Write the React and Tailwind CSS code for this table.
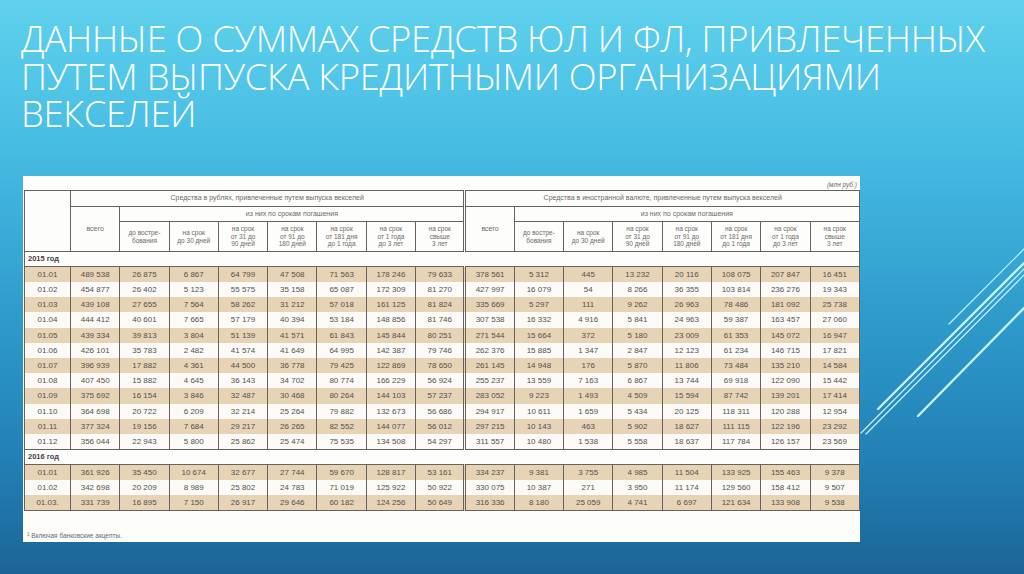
import React from "react";

const rows2015 = [
  ["01.01", "489 538", "26 875", "6 867", "64 799", "47 508", "71 563", "178 246", "79 633", "378 561", "5 312", "445", "13 232", "20 116", "108 075", "207 847", "16 451"],
  ["01.02", "454 877", "26 402", "5 123", "55 575", "35 158", "65 087", "172 309", "81 270", "427 997", "16 079", "54", "8 266", "36 355", "103 814", "236 276", "19 343"],
  ["01.03", "439 108", "27 655", "7 564", "58 262", "31 212", "57 018", "161 125", "81 824", "335 669", "5 297", "111", "9 262", "26 963", "78 486", "181 092", "25 738"],
  ["01.04", "444 412", "40 601", "7 665", "57 179", "40 394", "53 184", "148 856", "81 746", "307 538", "16 332", "4 916", "5 841", "24 963", "59 387", "163 457", "27 060"],
  ["01.05", "439 334", "39 813", "3 804", "51 139", "41 571", "61 843", "145 844", "80 251", "271 544", "15 664", "372", "5 180", "23 009", "61 353", "145 072", "16 947"],
  ["01.06", "426 101", "35 783", "2 482", "41 574", "41 649", "64 995", "142 387", "79 746", "262 376", "15 885", "1 347", "2 847", "12 123", "61 234", "146 715", "17 821"],
  ["01.07", "396 939", "17 882", "4 361", "44 500", "36 778", "79 425", "122 869", "78 650", "261 145", "14 948", "176", "5 870", "11 806", "73 484", "135 210", "14 584"],
  ["01.08", "407 450", "15 882", "4 645", "36 143", "34 702", "80 774", "166 229", "56 924", "255 237", "13 559", "7 163", "6 867", "13 744", "69 918", "122 090", "15 442"],
  ["01.09", "375 692", "16 154", "3 846", "32 487", "30 468", "80 264", "144 103", "57 237", "283 052", "9 223", "1 493", "4 509", "15 594", "87 742", "139 201", "17 414"],
  ["01.10", "364 698", "20 722", "6 209", "32 214", "25 264", "79 882", "132 673", "56 686", "294 917", "10 611", "1 659", "5 434", "20 125", "118 311", "120 288", "12 954"],
  ["01.11", "377 324", "19 156", "7 684", "29 217", "26 265", "82 552", "144 077", "56 012", "297 215", "10 143", "463", "5 902", "18 627", "111 115", "122 196", "23 292"],
  ["01.12", "356 044", "22 943", "5 800", "25 862", "25 474", "75 535", "134 508", "54 297", "311 557", "10 480", "1 538", "5 558", "18 637", "117 784", "126 157", "23 569"],
];

const rows2016 = [
  ["01.01", "361 926", "35 450", "10 674", "32 677", "27 744", "59 670", "128 817", "53 161", "334 237", "9 381", "3 755", "4 985", "11 504", "133 925", "155 463", "9 378"],
  ["01.02", "342 698", "20 209", "8 989", "25 802", "24 783", "71 019", "125 922", "50 922", "330 075", "10 387", "271", "3 950", "11 174", "129 560", "158 412", "9 507"],
  ["01.03.", "331 739", "16 895", "7 150", "26 917", "29 646", "60 182", "124 256", "50 649", "316 336", "8 180", "25 059", "4 741", "6 697", "121 634", "133 908", "9 538"],
];

const terms = [
  ["до востре-", "бования"],
  ["на срок", "до 30 дней"],
  ["на срок", "от 31 до", "90 дней"],
  ["на срок", "от 91 до", "180 дней"],
  ["на срок", "от 181 дня", "до 1 года"],
  ["на срок", "от 1 года", "до 3 лет"],
  ["на срок", "свыше", "3 лет"],
];

const bd = "border border-[#66625e]";

function TermCells() {
  return terms.map((t, i) => (
    <th key={i} className={`${bd} font-normal text-[6.5px] leading-[7.8px] text-[#6e6a66] align-middle`}>
      {t.map((l, j) => (
        <div key={j}>{l}</div>
      ))}
    </th>
  ));
}

function DataRow({ r, idx }) {
  const beige = idx % 2 === 0;
  return (
    <tr className={`h-[15.2px] ${beige ? "bg-[#e7d3b5]" : "bg-[#fbfaf7]"}`}>
      {r.map((c, i) => (
        <td
          key={i}
          className={`border-x border-[#66625e] text-center text-[8px] leading-[15px] p-0 text-[#55514d] ${i === 9 ? "border-l-[3px] border-l-[#66625e] border-double" : ""}`}
        >
          {c}
        </td>
      ))}
    </tr>
  );
}

function YearRow({ label }) {
  return (
    <tr className="h-[15px] bg-[#fdfdfc]">
      <td colSpan={17} className={`${bd} text-left pl-[3px] font-bold text-[7.5px] text-[#45413e]`}>
        {label}
      </td>
    </tr>
  );
}

export default function App() {
  const cols = [46, ...Array(16).fill(49.3)];
  return (
    <div className="relative w-[1024px] h-[574px] overflow-hidden bg-[linear-gradient(180deg,#5fd1ed_0%,#47bde3_25%,#2e9bcb_55%,#2280b5_80%,#1b6596_100%)]">
      <svg className="absolute inset-0" width="1024" height="574" viewBox="0 0 1024 574">
        <g stroke="#c6f1fb" strokeLinecap="round" fill="none">
          <line x1="949" y1="324" x2="1024" y2="249" strokeWidth="1.2" />
          <line x1="878" y1="409" x2="1024" y2="263" strokeWidth="2.4" />
          <line x1="861" y1="433" x2="1024" y2="269" strokeWidth="1.2" />
          <line x1="866" y1="434" x2="1024" y2="275" strokeWidth="1.2" />
          <line x1="918" y1="416" x2="1024" y2="308" strokeWidth="2.4" />
        </g>
      </svg>

      <div className="relative flex flex-col pl-[21px] pt-[20px]">
        <h1 className="text-white font-light text-[36.4px] leading-[37.5px] tracking-[-0.3px] [font-family:'Open_Sans',sans-serif]">
          <div>ДАННЫЕ О СУММАХ СРЕДСТВ ЮЛ И ФЛ, ПРИВЛЕЧЕННЫХ</div>
          <div>ПУТЕМ ВЫПУСКА КРЕДИТНЫМИ ОРГАНИЗАЦИЯМИ</div>
          <div>ВЕКСЕЛЕЙ</div>
        </h1>

        <div className="mt-[43.5px] ml-[2px] w-[837px] h-[366px] bg-[#fdfdfc] flex flex-col px-[1px] [font-family:'Liberation_Sans',Arial,sans-serif]">
          <div className="h-[14px] flex justify-end items-end pr-[2px] text-[6.5px] italic text-[#6e6a66]">(млн руб.)</div>
          <table className="table-fixed border-collapse w-[835px]">
            <colgroup>
              {cols.map((w, i) => (
                <col key={i} style={{ width: `${w}px` }} />
              ))}
            </colgroup>
            <thead>
              <tr className="h-[16px]">
                <th rowSpan={3} className={bd}></th>
                <th colSpan={8} className={`${bd} font-normal text-[7px] text-[#6e6a66]`}>
                  Средства в рублях, привлеченные путем выпуска векселей
                </th>
                <th colSpan={8} className={`${bd} border-l-[3px] border-double font-normal text-[7px] text-[#6e6a66]`}>
                  Средства в иностранной валюте, привлеченные путем выпуска векселей
                </th>
              </tr>
              <tr className="h-[15px]">
                <th rowSpan={2} className={`${bd} font-normal text-[7px] text-[#6e6a66]`}>всего</th>
                <th colSpan={7} className={`${bd} font-normal text-[7px] text-[#6e6a66]`}>из них по срокам погашения</th>
                <th rowSpan={2} className={`${bd} border-l-[3px] border-double font-normal text-[7px] text-[#6e6a66]`}>всего</th>
                <th colSpan={7} className={`${bd} font-normal text-[7px] text-[#6e6a66]`}>из них по срокам погашения</th>
              </tr>
              <tr className="h-[30px]">
                <TermCells />
                <TermCells />
              </tr>
            </thead>
            <tbody>
              <YearRow label="2015 год" />
              {rows2015.map((r, i) => (
                <DataRow key={i} r={r} idx={i} />
              ))}
              <YearRow label="2016 год" />
              {rows2016.map((r, i) => (
                <DataRow key={i} r={r} idx={i} />
              ))}
              <tr className="h-0">
                <td colSpan={17} className="border-t border-[#66625e] p-0"></td>
              </tr>
            </tbody>
          </table>
          <div className="mt-[20px] pl-[3px] text-[6.5px] text-[#6e6a66]">
            <sup className="text-[4.5px]">1</sup> Включая банковские акцепты.
          </div>
        </div>
      </div>
    </div>
  );
}
